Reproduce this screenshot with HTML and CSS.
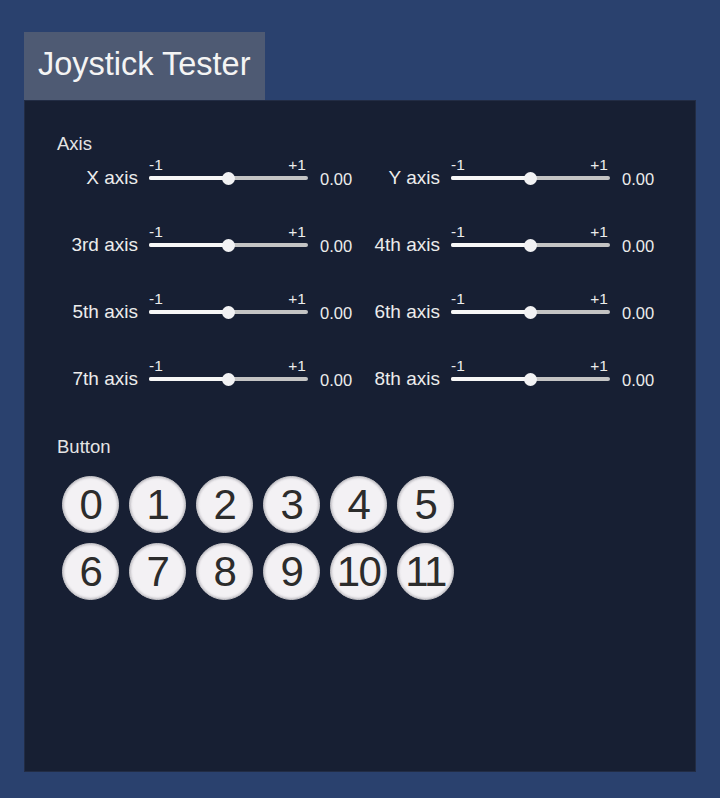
FILE: index.html
```html
<!DOCTYPE html>
<html>
<head>
<meta charset="utf-8">
<link rel="stylesheet" href="styles.css">
</head>
<body>
<div class="app">
  <div class="tab">Joystick Tester</div>
  <div class="panel">
    <div class="heading">Axis</div>
    <div class="axes">
      <div class="axis"><div class="label">X axis</div><div class="slider"><div class="scale"><span>-1</span><span>+1</span></div><div class="track-area"><div class="track"><div class="fill"></div></div><div class="knob"></div></div></div><div class="value">0.00</div></div>
      <div class="axis"><div class="label">Y axis</div><div class="slider"><div class="scale"><span>-1</span><span>+1</span></div><div class="track-area"><div class="track"><div class="fill"></div></div><div class="knob"></div></div></div><div class="value">0.00</div></div>
      <div class="axis"><div class="label">3rd axis</div><div class="slider"><div class="scale"><span>-1</span><span>+1</span></div><div class="track-area"><div class="track"><div class="fill"></div></div><div class="knob"></div></div></div><div class="value">0.00</div></div>
      <div class="axis"><div class="label">4th axis</div><div class="slider"><div class="scale"><span>-1</span><span>+1</span></div><div class="track-area"><div class="track"><div class="fill"></div></div><div class="knob"></div></div></div><div class="value">0.00</div></div>
      <div class="axis"><div class="label">5th axis</div><div class="slider"><div class="scale"><span>-1</span><span>+1</span></div><div class="track-area"><div class="track"><div class="fill"></div></div><div class="knob"></div></div></div><div class="value">0.00</div></div>
      <div class="axis"><div class="label">6th axis</div><div class="slider"><div class="scale"><span>-1</span><span>+1</span></div><div class="track-area"><div class="track"><div class="fill"></div></div><div class="knob"></div></div></div><div class="value">0.00</div></div>
      <div class="axis"><div class="label">7th axis</div><div class="slider"><div class="scale"><span>-1</span><span>+1</span></div><div class="track-area"><div class="track"><div class="fill"></div></div><div class="knob"></div></div></div><div class="value">0.00</div></div>
      <div class="axis"><div class="label">8th axis</div><div class="slider"><div class="scale"><span>-1</span><span>+1</span></div><div class="track-area"><div class="track"><div class="fill"></div></div><div class="knob"></div></div></div><div class="value">0.00</div></div>
    </div>
    <div class="heading button-heading">Button</div>
    <div class="buttons">
      <div class="btn">0</div><div class="btn">1</div><div class="btn">2</div><div class="btn">3</div><div class="btn">4</div><div class="btn">5</div>
      <div class="btn">6</div><div class="btn">7</div><div class="btn">8</div><div class="btn">9</div><div class="btn">10</div><div class="btn">11</div>
    </div>
  </div>
</div>
</body>
</html>
```
FILE: styles.css
```css
html, body {
  margin: 0;
  padding: 0;
}
body {
  background: #2a416e;
  font-family: "Liberation Sans", Arial, sans-serif;
  width: 720px;
  height: 798px;
  overflow: hidden;
}
.app {
  padding: 32px 0 0 24px;
}
.tab {
  width: 227px;
  height: 68px;
  padding-left: 14px;
  background: #4e5a73;
  color: #f4f4f4;
  font-size: 32.5px;
  line-height: 64px;
  box-sizing: content-box;
}
.panel {
  width: 672px;
  height: 672px;
  box-sizing: border-box;
  background: #171f33;
  box-shadow: inset 0 0 0 1px #222c44;
  padding: 34px 0 0 33px;
}
.heading {
  color: #e4e4e4;
  font-size: 18.5px;
  line-height: 20px;
  height: 20px;
}
.axes {
  margin-top: 3px;
  display: grid;
  grid-template-columns: 302px 302px;
  row-gap: 37px;
}
.axis {
  display: flex;
  align-items: flex-end;
  height: 30px;
}
.label {
  width: 81px;
  margin-right: 11px;
  text-align: right;
  color: #ececec;
  font-size: 19px;
  line-height: 20px;
  margin-bottom: -1px;
  white-space: nowrap;
}
.slider {
  width: 159px;
  display: flex;
  flex-direction: column;
}
.scale {
  display: flex;
  justify-content: space-between;
  color: #ececec;
  font-size: 15.5px;
  line-height: 16px;
  height: 16px;
  padding-right: 2px;
}
.track-area {
  position: relative;
  height: 14px;
}
.track {
  margin-top: 3px;
  height: 4px;
  border-radius: 2px;
  background: #c4c4c4;
  overflow: hidden;
}
.fill {
  width: 50%;
  height: 100%;
  background: #f7f7f7;
}
.knob {
  position: absolute;
  left: 73px;
  top: -1.5px;
  width: 13px;
  height: 13px;
  border-radius: 50%;
  background: #f2f2f4;
}
.value {
  margin-left: 12px;
  width: 39px;
  color: #ececec;
  font-size: 16.5px;
  line-height: 20px;
  margin-bottom: -2px;
}
.button-heading {
  margin-top: 49px;
}
.buttons {
  margin-top: 19px;
  margin-left: 5px;
  display: grid;
  grid-template-columns: repeat(6, 57px);
  grid-auto-rows: 57px;
  gap: 10px;
}
.btn {
  width: 57px;
  height: 57px;
  box-sizing: border-box;
  border-radius: 50%;
  background: #f3f1f4;
  border: 1px solid #c4c3c7;
  box-shadow: inset 0 0 2px 1px rgba(160, 158, 165, 0.55);
  color: #2c2c2c;
  font-size: 42px;
  line-height: 55px;
  text-align: center;
  letter-spacing: -1.5px;
}
```
